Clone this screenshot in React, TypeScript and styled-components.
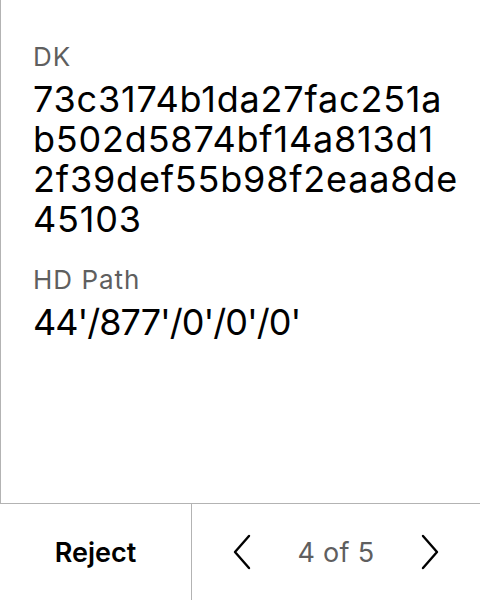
import React from "react";
import styled, { createGlobalStyle } from "styled-components";

const Global = createGlobalStyle`
  html, body { margin: 0; padding: 0; background: #fff; }
  body { font-family: Inter, "Noto Sans", sans-serif; }
  * { box-sizing: border-box; }
`;

const Screen = styled.div`
  width: 480px;
  height: 600px;
  display: flex;
  flex-direction: column;
  background: #fff;
`;

const Content = styled.div`
  flex: 1;
  border-left: 1px solid #b3b3b3;
  padding: 41px 24px 0 32px;
  display: flex;
  flex-direction: column;
  gap: 25px;
`;

const Field = styled.div`
  display: flex;
  flex-direction: column;
  gap: 6px;
`;

const Label = styled.div`
  font-size: 26px;
  line-height: 32px;
  letter-spacing: 1px;
  color: #5f5f5f;
`;

const Value = styled.div<{ $tight?: boolean }>`
  font-size: 36px;
  line-height: 40px;
  letter-spacing: ${(p) => (p.$tight ? "-1px" : "0.8px")};
  color: #000;
`;

const Line = styled.div`
  white-space: nowrap;
`;

const Footer = styled.div`
  height: 97px;
  border-top: 1px solid #b3b3b3;
  display: grid;
  grid-template-columns: 192px 1fr;
`;

const RejectButton = styled.button`
  border: none;
  border-right: 1px solid #b3b3b3;
  background: none;
  font-family: Inter, sans-serif;
  font-weight: 600;
  font-size: 27px;
  color: #000;
  padding: 0;
`;

const Pager = styled.div`
  display: flex;
  align-items: center;
  justify-content: center;
  gap: 46px;
`;

const PageText = styled.span`
  font-size: 27px;
  letter-spacing: 0.3px;
  color: #5f5f5f;
`;

const Arrow = styled.svg`
  width: 18px;
  height: 36px;
  display: block;
`;

const Chevron = ({ dir }: { dir: "left" | "right" }) => (
  <Arrow viewBox="0 0 18 36" fill="none" stroke="#000" strokeWidth={2.4} strokeLinecap="round" strokeLinejoin="round">
    {dir === "left" ? <polyline points="16,2 2,18 16,34" /> : <polyline points="2,2 16,18 2,34" />}
  </Arrow>
);

const DK_LINES = [
  "73c3174b1da27fac251a",
  "b502d5874bf14a813d1",
  "2f39def55b98f2eaa8de",
  "45103",
];

export default function App() {
  return (
    <Screen>
      <Global />
      <Content>
        <Field>
          <Label>DK</Label>
          <Value>
            {DK_LINES.map((l, i) => (
              <Line key={i}>{l}</Line>
            ))}
          </Value>
        </Field>
        <Field>
          <Label>HD Path</Label>
          <Value $tight>44'/877'/0'/0'/0'</Value>
        </Field>
      </Content>
      <Footer>
        <RejectButton>Reject</RejectButton>
        <Pager>
          <Chevron dir="left" />
          <PageText>4 of 5</PageText>
          <Chevron dir="right" />
        </Pager>
      </Footer>
    </Screen>
  );
}
